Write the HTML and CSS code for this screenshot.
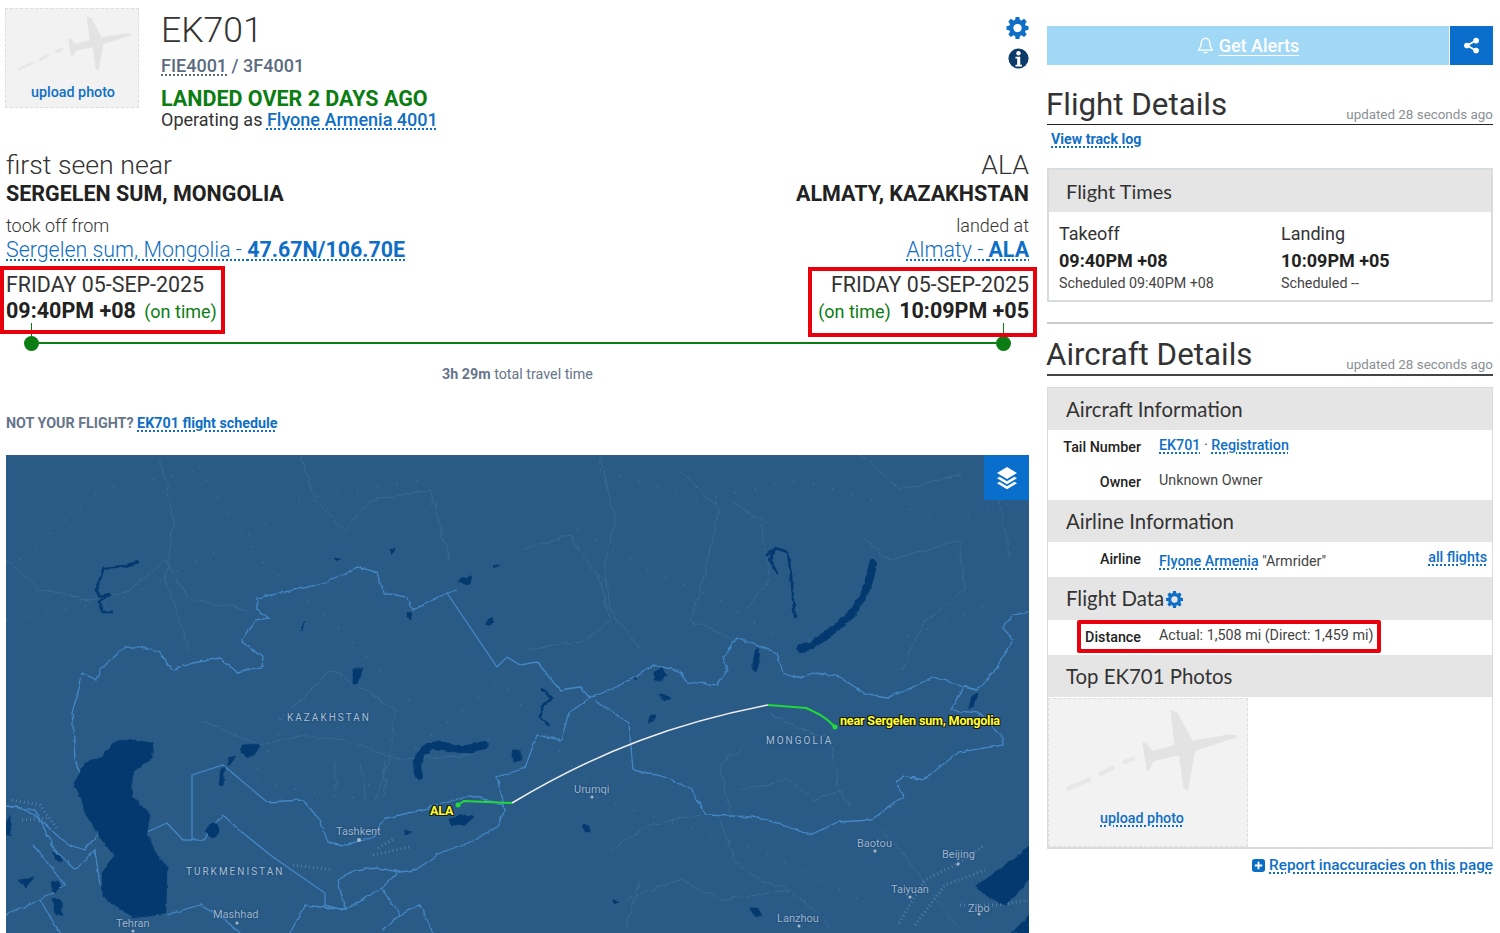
FILE: index.html
```html
<!DOCTYPE html>
<html lang="en">
<head>
<meta charset="utf-8">
<title>EK701 Flight Track</title>
<link rel="stylesheet" href="styles.css">
</head>
<body>
<svg class="defs" width="0" height="0" aria-hidden="true">
  <defs>
    <symbol id="plane" viewBox="0 0 134 75">
      <path fill="#e3e3e3" d="M82 7 L87 9 L97 28 L122 24 Q129 24 127 26 L99 35 L94 62 L91 60 L88 38 L71 42 L67 49 L66 47 L63 29 L66 30 L70 35 L85 31 Z"/>
      <path fill="none" stroke="#e7e7e7" stroke-width="3" d="M58 40 L50 43 M44 46 L34 51 M28 54 L12 61"/>
    </symbol>
    <symbol id="gear" viewBox="0 0 24 24">
      <path fill-rule="evenodd" fill="currentColor" d="M10 1h4l.7 3.2 1.6.7L19.200 3 22 6l-1.800 2.800.6 1.600L24 11v4l-3.200.6-.6 1.600L22 20l-2.800 2.800-2.900-1.900-1.600.7L14 25h-4l-.7-3.400-1.600-.7L4.800 22.800 2 20l1.800-2.800-.6-1.600L0 15v-4l3.200-.6.6-1.600L2 6l2.800-3 2.900 1.900 1.600-.7zM12 8.500a4.500 4.500 0 1 0 0 9 4.500 4.500 0 0 0 0-9z" transform="translate(0 -1)"/>
    </symbol>
    <filter id="rough" x="-5%" y="-5%" width="110%" height="110%" color-interpolation-filters="sRGB">
      <feTurbulence type="fractalNoise" baseFrequency="0.09" numOctaves="3" seed="4" result="n"/>
      <feDisplacementMap in="SourceGraphic" in2="n" scale="7" xChannelSelector="R" yChannelSelector="G"/>
    </filter>
    <filter id="rough-sm" x="-5%" y="-5%" width="110%" height="110%" color-interpolation-filters="sRGB">
      <feTurbulence type="fractalNoise" baseFrequency="0.14" numOctaves="2" seed="9" result="n"/>
      <feDisplacementMap in="SourceGraphic" in2="n" scale="4" xChannelSelector="R" yChannelSelector="G"/>
    </filter>
  </defs>
</svg>
<div class="page">
  <main class="main">
    <header class="head">
      <div class="photo-sm">
        <svg class="plane-sm"><use href="#plane"/></svg>
        <a class="upload-sm">upload photo</a>
      </div>
      <div class="ident">
        <h1 class="flight-no">EK701</h1>
        <div class="codes"><span class="dotted">FIE4001</span> / 3F4001</div>
        <div class="status">LANDED OVER 2 DAYS AGO</div>
        <div class="operating">Operating as <a class="link med">Flyone Armenia 4001</a></div>
      </div>
      <div class="tools">
        <svg class="gear-lg"><use href="#gear"/></svg>
        <svg class="info" viewBox="0 0 24 24"><circle cx="12" cy="12" r="11.500" fill="#0b3a6b"/><circle cx="12" cy="6" r="2.500" fill="#fff"/><path d="M8.500 10h5.500v9h2v2H8.500v-2h2v-7h-2z" fill="#fff"/></svg>
      </div>
    </header>

    <section class="route">
      <div class="end">
        <div class="place-light">first seen near</div>
        <div class="place-bold">SERGELEN SUM, MONGOLIA</div>
        <div class="verb">took off from</div>
        <div class="airport"><a class="link">Sergelen sum, Mongolia - <b>47.67N/106.70E</b></a></div>
        <div class="when when-left">
          <div class="date">FRIDAY 05-SEP-2025</div>
          <div class="time">09:40PM +08 <span class="ontime">(on time)</span></div>
        </div>
      </div>
      <div class="end end-right">
        <div class="place-light">ALA</div>
        <div class="place-bold">ALMATY, KAZAKHSTAN</div>
        <div class="verb">landed at</div>
        <div class="airport"><a class="link">Almaty - <b>ALA</b></a></div>
        <div class="when when-right">
          <div class="date">FRIDAY 05-SEP-2025</div>
          <div class="time"><span class="ontime">(on time)</span> 10:09PM +05</div>
        </div>
      </div>
    </section>

    <div class="track"><i class="dot dot-a"></i><i class="bar"></i><i class="dot dot-b"></i></div>
    <div class="travel"><b>3h 29m</b> total travel time</div>
    <div class="notyours"><b>NOT YOUR FLIGHT?</b> <a class="link bold">EK701 flight schedule</a></div>

    <div class="map">
      <svg class="map-svg" viewBox="6 455 1023 478" preserveAspectRatio="none">
        <g class="specks">
          <path d="M6 620 L120 600 L240 540 L300 500 L420 480"/>
          <path d="M20 560 L100 490 L200 470 L260 560 L330 620 L410 700"/>
          <path d="M560 520 L650 570 L720 600 L780 640 L900 640 L1000 600"/>
          <path d="M600 470 L700 500 L800 480 L950 520 L1020 500"/>
          <path d="M300 700 L250 780 L350 800 L500 680 L600 800 L760 850 L860 900"/>
        </g>
        <g class="admin" filter="url(#rough)">
          <path d="M6 560 L40 590 L90 600 L130 590 L165 560 L190 600 L245 610"/>
          <path d="M160 460 L175 520 L165 580 L190 650"/>
          <path d="M300 455 L315 500 L345 530 L370 500 L430 490 L450 560"/>
          <path d="M280 720 L330 670 L350 680 L395 710 L390 760 L375 800"/>
          <path d="M200 720 L260 745 L300 735 L345 740 L400 760 L470 755 L490 740"/>
          <path d="M360 760 L365 800 M335 760 L335 790 M385 760 L385 795"/>
          <path d="M520 550 L570 535 L600 580 L610 620 L585 640 L530 650"/>
          <path d="M600 455 L610 500 L615 520 L605 560 L610 610 L640 650"/>
          <path d="M680 470 L720 510 L700 590 L690 620 L735 640"/>
          <path d="M730 500 L760 520 L770 580 L745 610"/>
          <path d="M860 455 L900 490 L960 475 M865 540 L890 560 L960 540 L965 590 L925 620 L900 670"/>
          <path d="M1000 500 L1010 560"/>
          <path d="M745 745 L720 765 L730 815 M770 715 L830 740 L840 790 L850 810 M740 790 L790 780 L815 800 L845 790"/>
          <path d="M610 850 L650 825 L700 815 M720 820 L735 860 L760 880 L790 890 L830 925 M640 880 L625 930 M625 900 L680 880 L720 900 L790 890"/>
          <path d="M880 830 L900 850 L930 890 L960 930"/>
        </g>
        <g class="cities">
          <path d="M899 923 L925 880 L959 863 L985 845"/>
          <path d="M915 925 L945 885 L985 870"/>
          <path d="M960 905 L1000 905 L1028 900"/>
          <path d="M293 865 L333 870"/>
          <path d="M373 855 L410 847 M378 848 L395 838"/>
          <path d="M22 820 L48 818 M12 800 L40 805 L58 830"/>
        </g>
        <g class="border" filter="url(#rough-sm)">
          <path d="M6 806 L20 808 L35 815 L60 838 L70 845 L85 850 L97 835 L100 825 L75 760 L73 725 L72 713 L80 685 L82 673 L97 680 L100 670 L125 647 L143 647 L160 653 L173 670 L193 663 L220 658 L237 672 L262 667 L263 657 L242 642 L255 620 L268 618 L257 610 L257 598 L317 585 L347 573 L357 567 L377 572 L383 593 L407 597 L413 610 L447 593 L457 590"/>
          <path d="M520 665 L537 662 L560 690 L580 687 L590 698 L617 687 L653 665 L677 670 L687 682 L717 685 L728 670 L723 657 L737 638 L777 653 L783 673 L797 678 L817 672 L840 677 L867 695 L887 698 L913 687 L933 677 L977 690 L993 673 L1013 640 L1003 627 L1013 615 L1028 612"/>
          <path d="M595 700 L629 723 L633 770 L665 777 L692 790 L706 815 L754 817 L778 823 L810 835 L838 822 L871 820 L903 797 L897 783 L903 775 L923 780 L959 752 L1003 745 L1003 737 L979 713 L951 710 L963 687 L977 690"/>
          <path d="M590 698 L569 713 L561 740 L537 735 L525 768 L497 777 L505 810 L497 827 L468 843 L440 853 L416 870 L400 872 L378 868 L355 870 L338 880 L345 910 L382 888 L400 870"/>
          <path d="M505 805 L470 795 L455 800 L420 810 L400 815 L385 818 L372 838 L343 845 L328 842 L320 820 L303 800 L267 802"/>
          <path d="M192 840 L203 840 L223 815 L243 833"/>
          <path d="M382 888 L400 915 L420 905 L433 933"/>
          <path d="M400 915 L382 930 M345 910 L305 905 L290 933"/>
          <path d="M6 806 L35 810 L55 850 L75 870 L95 850 L100 885"/>
          <path d="M167 915 L200 905 L225 920 L240 933"/>
          <path d="M33 845 L45 860 L65 885 L40 900 L6 915 M40 900 L60 933"/>
        </g>
        <g class="border">
          <path d="M447 593 L497 667 L507 657 L520 665"/>
          <path d="M267 802 L223 765 L192 775 L192 840 L183 840 L167 823 L147 832"/>
          <path d="M243 833 L273 857 L325 893 L325 905 L343 910"/>
        </g>
        <g class="water" filter="url(#rough-sm)">
          <path d="M128 739 L153 743 L152 757 L133 772 L132 783 L133 797 L150 815 L147 833 L153 850 L167 867 L166 913 L133 917 L103 897 L102 873 L115 855 L100 837 L83 810 L82 800 L74 783 L85 763 L103 757 L113 743 Z"/>
          <path class="band" d="M419 776 C414 762 420 750 432 746 C445 743 452 750 465 749 C472 749 478 746 485 745"/>
          <path class="band" d="M873 564 C870 585 862 600 853 612 C845 622 835 628 825 636 C815 642 812 648 800 648"/>
          <path d="M448 818 L465 815 L474 817 L465 825 L452 826 Z"/>
          <path d="M242 745 L256 744 L261 745 L254 755 L246 757 L241 752 Z M228 758 L236 756 L228 765 Z M221 768 L225 767 L223 786 L219 785 Z"/>
          <path d="M205 832 L210 823 L217 825 L219 833 L212 838 Z"/>
          <path d="M50 882 L58 880 L62 886 L55 893 Z M18 880 L34 878 L25 888 Z M52 898 L61 900 L62 915 L55 915 Z M6 823 L10 815 L11 835 L6 835 Z M52 852 L60 856 L62 862 L55 860 Z"/>
          <path class="thin" d="M138 562 L125 566 L104 568 L96 590 L100 596 L110 594 L99 602 L102 612 L113 612"/>
          <path d="M462 578 L472 576 L470 584 L458 583 Z M491 616 L494 622 L491 625 L486 623 Z M493 567 L499 565 L494 569 Z M390 549 L396 550 L392 555 Z M335 558 L341 559 L336 561 Z M407 612 L412 613 L411 619 L407 617 Z M300 630 L305 622 L304 627 Z M353 670 L363 668 L359 678 L357 684 L353 684 Z M404 830 L412 832 L405 835 Z M512 750 L520 750 L522 760 L514 762 Z"/>
          <path class="thin" d="M767 555 L775 548 L788 552 L790 570 L792 583 L793 600 L795 617 M775 548 L770 560 L778 575"/>
          <path d="M755 650 L759 648 L760 660 L756 672 L752 670 Z"/>
          <path d="M654 672 L662 668 L666 675 L660 682 L654 680 Z M659 695 L668 696 L671 699 L662 700 Z M650 716 L656 716 L653 722 L648 722 Z M634 678 L637 677 L636 680 Z"/>
          <path d="M972 696 L978 693 L974 708 L968 708 Z"/>
          <path class="thin" d="M540 688 L552 698 L542 707 L540 717 L550 725"/>
          <path d="M1029 847 L1005 865 L985 880 L975 885 L985 895 L995 900 L1005 905 L1020 890 L1029 880 Z M1029 915 L1012 933 L1029 933 Z"/>
          <path d="M750 908 L758 908 L762 916 L755 918 Z M612 900 L618 901 L614 904 Z M582 825 L590 826 L590 832 L584 832 Z"/>
        </g>
        <path class="route-line white" d="M512 803 C600 750 680 722 768 705"/>
        <path class="route-line green" d="M835 727 C825 716 815 712 806 708 L768 705"/>
        <path class="route-line green" d="M512 803 L464 801 L458 805"/>
        <circle cx="835" cy="727" r="2.500" class="end-dot"/>
        <circle cx="458" cy="805" r="2.500" class="end-dot"/>
        <g class="city-dots">
          <circle cx="592" cy="797" r="1.500"/><circle cx="875" cy="851" r="1.500"/><circle cx="958" cy="864" r="1.500"/><circle cx="910" cy="897" r="1.500"/><circle cx="979" cy="914" r="1.500"/><circle cx="799" cy="926" r="1.500"/><circle cx="359" cy="840" r="2"/><circle cx="237" cy="923" r="1.500"/><circle cx="133" cy="931" r="1.500"/>
        </g>
      </svg>
      <div class="map-labels">
        <span class="country l-kz">KAZAKHSTAN</span>
        <span class="country l-tm">TURKMENISTAN</span>
        <span class="country l-mn">MONGOLIA</span>
        <span class="city l-tashkent">Tashkent</span>
        <span class="city l-mashhad">Mashhad</span>
        <span class="city l-tehran">Tehran</span>
        <span class="city l-urumqi">Urumqi</span>
        <span class="city l-baotou">Baotou</span>
        <span class="city l-beijing">Beijing</span>
        <span class="city l-taiyuan">Taiyuan</span>
        <span class="city l-zibo">Zibo</span>
        <span class="city l-lanzhou">Lanzhou</span>
        <span class="pin l-ala">ALA</span>
        <span class="pin l-near">near Sergelen sum, Mongolia</span>
      </div>
      <div class="layers">
        <svg viewBox="0 0 24 24" width="24" height="24"><path fill="#fff" d="M12 1 L22 7 L12 13 L2 7 Z M4.500 10.700 L12 15.200 L19.500 10.700 L22 12.200 L12 18.200 L2 12.200 Z M4.500 15.800 L12 20.300 L19.500 15.800 L22 17.300 L12 23.300 L2 17.300 Z"/></svg>
      </div>
    </div>
  </main>

  <aside class="side">
    <div class="alerts">
      <div class="alert-btn">
        <svg viewBox="0 0 20 22" width="17" height="19"><path fill="none" stroke="#fff" stroke-width="1.600" d="M10 2.500c-3 0-5 2.500-5 5.500 0 5-2.500 7-3 8.500h16c-.5-1.500-3-3.500-3-8.500 0-3-2-5.500-5-5.500zM8 18.500c.5 1.500 3.500 1.500 4 0"/></svg>
        <span class="alert-text">Get Alerts</span>
      </div>
      <div class="share">
        <svg viewBox="0 0 24 24" width="17" height="17"><path fill="none" stroke="#fff" stroke-width="2.500" d="M18 5 L6 12 L18 19"/><circle cx="18.500" cy="5" r="4" fill="#fff"/><circle cx="5.500" cy="12" r="4" fill="#fff"/><circle cx="18.500" cy="19" r="4" fill="#fff"/></svg>
      </div>
    </div>

    <div class="sec-title"><h2>Flight Details</h2><span class="updated">updated 28 seconds ago</span></div>
    <a class="link bold tracklog">View track log</a>

    <section class="panel times">
      <h3 class="panel-head head-times">Flight Times</h3>
      <div class="times-grid">
        <div>
          <div class="t-label">Takeoff</div>
          <div class="t-time">09:40PM +08</div>
          <div class="t-sched">Scheduled 09:40PM +08</div>
        </div>
        <div>
          <div class="t-label">Landing</div>
          <div class="t-time">10:09PM +05</div>
          <div class="t-sched">Scheduled --</div>
        </div>
      </div>
    </section>

    <hr class="rule">

    <div class="sec-title sec-two"><h2>Aircraft Details</h2><span class="updated">updated 28 seconds ago</span></div>

    <section class="panel info-panel">
      <h3 class="panel-head">Aircraft Information</h3>
      <div class="row row-tail"><span class="k">Tail Number</span><span class="v"><a class="link med">EK701</a> · <a class="link med">Registration</a></span></div>
      <div class="row row-owner"><span class="k">Owner</span><span class="v">Unknown Owner</span></div>
      <h3 class="panel-head">Airline Information</h3>
      <div class="row row-airline"><span class="k">Airline</span><span class="v v-air"><a class="link med">Flyone Armenia</a> "Armrider"</span><a class="link med allflights">all flights</a></div>
      <h3 class="panel-head head-data">Flight Data <svg class="gear-sm"><use href="#gear"/></svg></h3>
      <div class="row row-dist"><span class="k">Distance</span><span class="v">Actual: 1,508 mi (Direct: 1,459 mi)</span><i class="red-dist"></i></div>
      <h3 class="panel-head">Top EK701 Photos</h3>
      <div class="photo-lg">
        <svg class="plane-lg"><use href="#plane"/></svg>
        <a class="link med upload-lg">upload photo</a>
      </div>
    </section>

    <div class="report">
      <svg viewBox="0 0 14 14" width="13" height="13"><rect width="14" height="14" rx="3" fill="#0a6ec4"/><path d="M6 3h2v3h3v2H8v3H6V8H3V6h3z" fill="#fff"/></svg>
      <a class="link med">Report inaccuracies on this page</a>
    </div>
  </aside>
</div>
</body>
</html>
```
FILE: styles.css
```css
* { box-sizing: border-box; }
html, body { margin: 0; padding: 0; background: #fff; }
body { font-family: Roboto, "Liberation Sans", sans-serif; color: #222; height: 933px; overflow: hidden; }
.defs { position: absolute; }
.page { display: flex; gap: 18px; padding-left: 6px; height: 933px; overflow: hidden; }
.main { width: 1023px; flex: none; }
.side { width: 446px; flex: none; }
h1, h2, h3 { margin: 0; font-weight: 400; }

.link { color: #0f6fc6; text-decoration: underline dotted 1.5px; text-underline-offset: 2px; }
.med { font-weight: 500; }
.bold { font-weight: 700; }
.dotted { text-decoration: underline dotted 1.5px; text-underline-offset: 2px; }

.head { display: flex; height: 142px; position: relative; }
.photo-sm { width: 134px; height: 100px; margin: 8px 22px 0 -1px; background: #f2f2f2; border: 1px dashed #dedede; display: flex; flex-direction: column; align-items: center; flex: none; }
.plane-sm { width: 132px; height: 75px; flex: none; }
.upload-sm { color: #0f6fc6; font-size: 14.300px; font-weight: 500; line-height: 17px; margin-left: 2px; }
.ident { flex: 1; padding-top: 10px; }
.flight-no { font-size: 35.500px; font-weight: 300; line-height: 40px; color: #333; }
.codes { font-size: 18px; font-weight: 500; color: #5b6b80; line-height: 24px; margin-top: 4px; }
.status { font-size: 21.500px; font-weight: 700; color: #0b7d12; line-height: 26px; margin-top: 8px; }
.operating { font-size: 18px; line-height: 20px; margin-top: -2px; color: #333; }
.tools { display: flex; flex-direction: column; align-items: flex-end; gap: 9px; padding-top: 17px; }
.gear-lg { width: 23px; height: 22px; color: #0f6fc6; }
.info { width: 21px; height: 21px; }

.route { display: flex; justify-content: space-between; height: 186px; margin-top: 7px; }
.end-right { text-align: right; }
.place-light { font-size: 26.700px; font-weight: 300; line-height: 32px; color: #333; }
.place-bold { font-size: 21.500px; font-weight: 700; line-height: 25px; color: #222; }
.verb { font-size: 18px; font-weight: 300; line-height: 22px; margin-top: 9px; color: #333; }
.airport { font-size: 21.400px; font-weight: 300; line-height: 26px; margin-top: 0; }
.airport b { font-weight: 700; }
.when { position: relative; margin-top: 9px; width: fit-content; }
.end-right .when { margin-left: auto; }
.date { font-size: 21.400px; line-height: 26px; color: #333; }
.time { font-size: 21.500px; font-weight: 700; line-height: 26px; color: #222; }
.ontime { font-size: 18px; font-weight: 400; color: #0b7d12; margin: 0 0 0 3px; }
.when-right .ontime { margin: 0 3px 0 0; }
.when::after { content: ""; box-sizing: border-box; position: absolute; z-index: 1; border: 4px solid #e8000d; pointer-events: none; }
.when-left::after { left: -6px; right: -8px; top: -6px; height: 68px; }
.when-right::after { left: -10px; right: -8px; top: -5px; height: 70px; }

.track { display: flex; align-items: center; height: 16px; margin: 0 18px; position: relative; }
.bar { flex: 1; height: 2px; background: #0b7d12; }
.dot { width: 15px; height: 15px; border-radius: 50%; background: #0b7d12; flex: none; position: relative; }
.dot::before { content: ""; position: absolute; left: 7px; top: -13px; width: 1px; height: 14px; background: #0b7d12; }
.travel { text-align: center; font-size: 14.300px; color: #66758a; line-height: 18px; margin-top: 14px; }
.travel b { font-weight: 700; }
.notyours { font-size: 14.300px; line-height: 18px; margin-top: 31px; color: #66758a; }
.notyours b { font-weight: 700; }

.map { position: relative; width: 1023px; height: 478px; margin-top: 23px; background: #2a5b87; overflow: hidden; }
.map-svg { display: block; width: 1023px; height: 478px; }
.specks path { fill: none; stroke: #3f7099; stroke-width: 2; stroke-dasharray: 1 19; }
.admin path { fill: none; stroke: #386a94; stroke-width: 1; }
.cities path { fill: none; stroke: #4f7ea6; stroke-width: 3; stroke-dasharray: 1 3; }
.border path { fill: none; stroke: #4587c4; stroke-width: 1.300; }
.water path { fill: #04396f; stroke: #04396f; stroke-width: .6; }
.water .thin { fill: none; stroke-width: 2.500; }
.water .band { fill: none; stroke-width: 8; stroke-linecap: round; }
.route-line { fill: none; }
.white { stroke: #eee; stroke-width: 1.500; }
.green { stroke: #22d83a; stroke-width: 2; }
.end-dot { fill: #22d83a; }
.city-dots circle { fill: #a9bccd; }
.map-labels span { position: absolute; white-space: nowrap; }
.country { font-size: 10px; letter-spacing: 2px; color: #a9bfd4; text-shadow: 0 0 2px #123a66; }
.city { font-size: 11px; color: #9db4cb; text-shadow: 0 0 2px #123a66; }
.pin { font-size: 12.600px; font-weight: 700; color: #ffff2a; text-shadow: -1px -1px 0 #1a1a1a, 1px -1px 0 #1a1a1a, -1px 1px 0 #1a1a1a, 1px 1px 0 #1a1a1a; letter-spacing: -.2px; }
.l-kz { left: 281px; top: 257px; }
.l-tm { left: 180px; top: 411px; }
.l-mn { left: 760px; top: 280px; }
.l-tashkent { left: 330px; top: 370px; }
.l-mashhad { left: 207px; top: 453px; }
.l-tehran { left: 110px; top: 462px; }
.l-urumqi { left: 568px; top: 328px; }
.l-baotou { left: 851px; top: 382px; }
.l-beijing { left: 936px; top: 393px; }
.l-taiyuan { left: 885px; top: 428px; }
.l-zibo { left: 962px; top: 447px; }
.l-lanzhou { left: 771px; top: 457px; }
.l-ala { left: 424px; top: 348px; }
.l-near { left: 834px; top: 258px; }
.layers { position: absolute; right: 0; top: 0; width: 45px; height: 45px; background: #0a6fcc; display: flex; align-items: center; justify-content: center; }

.alerts { display: flex; gap: 1px; height: 39px; margin-top: 26px; }
.alert-btn { flex: 1; background: #a0d8f5; display: flex; align-items: center; justify-content: center; gap: 5px; color: #fff; font-size: 18px; font-weight: 500; padding-bottom: 1px; }
.alert-text { text-decoration: underline 1px; text-underline-offset: 3px; }
.share { width: 43px; background: #0a6fcc; display: flex; align-items: center; justify-content: center; }

.sec-title { display: flex; justify-content: space-between; align-items: flex-end; border-bottom: 1px solid #222; height: 36px; margin-top: 24px; }
.sec-title h2 { font-size: 31.300px; line-height: 36px; color: #333; margin-bottom: 1px; margin-left: -1px; }
.updated { font-size: 13.400px; color: #8b8f94; line-height: 18px; }
.tracklog { display: inline-block; font-size: 14.200px; line-height: 18px; margin: 5px 0 0 4px; }
.sec-two { margin-top: 15px; height: 37px; border-bottom-width: 2px; border-bottom-color: #444; }

.panel { border: 2px solid #d9dcdf; }
.panel-head { background: #e5e5e5; font-family: Lato, sans-serif; font-size: 20.400px; line-height: 42px; height: 42px; padding-left: 18px; color: #333; margin: 0; }
.head-times { font-size: 20px; padding-left: 17px; }
.times { margin-top: 20px; height: 134px; }
.times-grid { display: grid; grid-template-columns: 222px 1fr; padding: 11px 0 0 10px; }
.t-label { font-size: 18px; line-height: 22px; color: #333; }
.t-time { font-size: 18px; font-weight: 700; line-height: 22px; margin-top: 5px; }
.t-sched { font-size: 14.300px; line-height: 18px; margin-top: 2px; color: #444; }
.rule { border: 0; height: 2px; background: #c5cbd0; margin: 20px 0 0; }

.info-panel { margin-top: 11px; height: 462px; border-width: 1px 1px 2px 1px; }
.row { display: flex; position: relative; font-size: 14.300px; }
.k { width: 93px; text-align: right; font-weight: 500; flex: none; color: #222; white-space: nowrap; }
.v { margin-left: 18px; color: #444; }
.row-tail { height: 35px; padding-top: 7px; }
.row-owner { height: 35px; padding-top: 7px; }
.row-tail .k { padding-top: 2px; }
.row-owner .k { padding-top: 2px; }
.row-airline { height: 35px; padding-top: 9px; }
.v-air { padding-top: 2px; }
.allflights { position: absolute; right: 5px; top: 7px; }
.head-data { height: 43px; }
.row-dist { height: 35px; padding-top: 7px; }
.row-dist .k { padding-top: 2px; }
.red-dist { position: absolute; left: 29px; top: 0; width: 304px; height: 33px; border: 4px solid #e8000d; border-radius: 2px; }
.gear-sm { width: 17px; height: 17px; color: #0f6fc6; vertical-align: -2px; margin-left: -3px; }
.photo-lg { width: 200px; height: 149px; background: #f2f2f2; border: 1px dashed #dedede; margin: 1px 0 0 0; display: flex; flex-direction: column; align-items: center; }
.plane-lg { width: 198px; height: 111px; flex: none; }
.upload-lg { font-size: 14.300px; margin-left: -12px; }
.report { display: flex; justify-content: flex-end; align-items: center; gap: 4px; margin-top: 7px; font-size: 15.300px; line-height: 18px; }
```
